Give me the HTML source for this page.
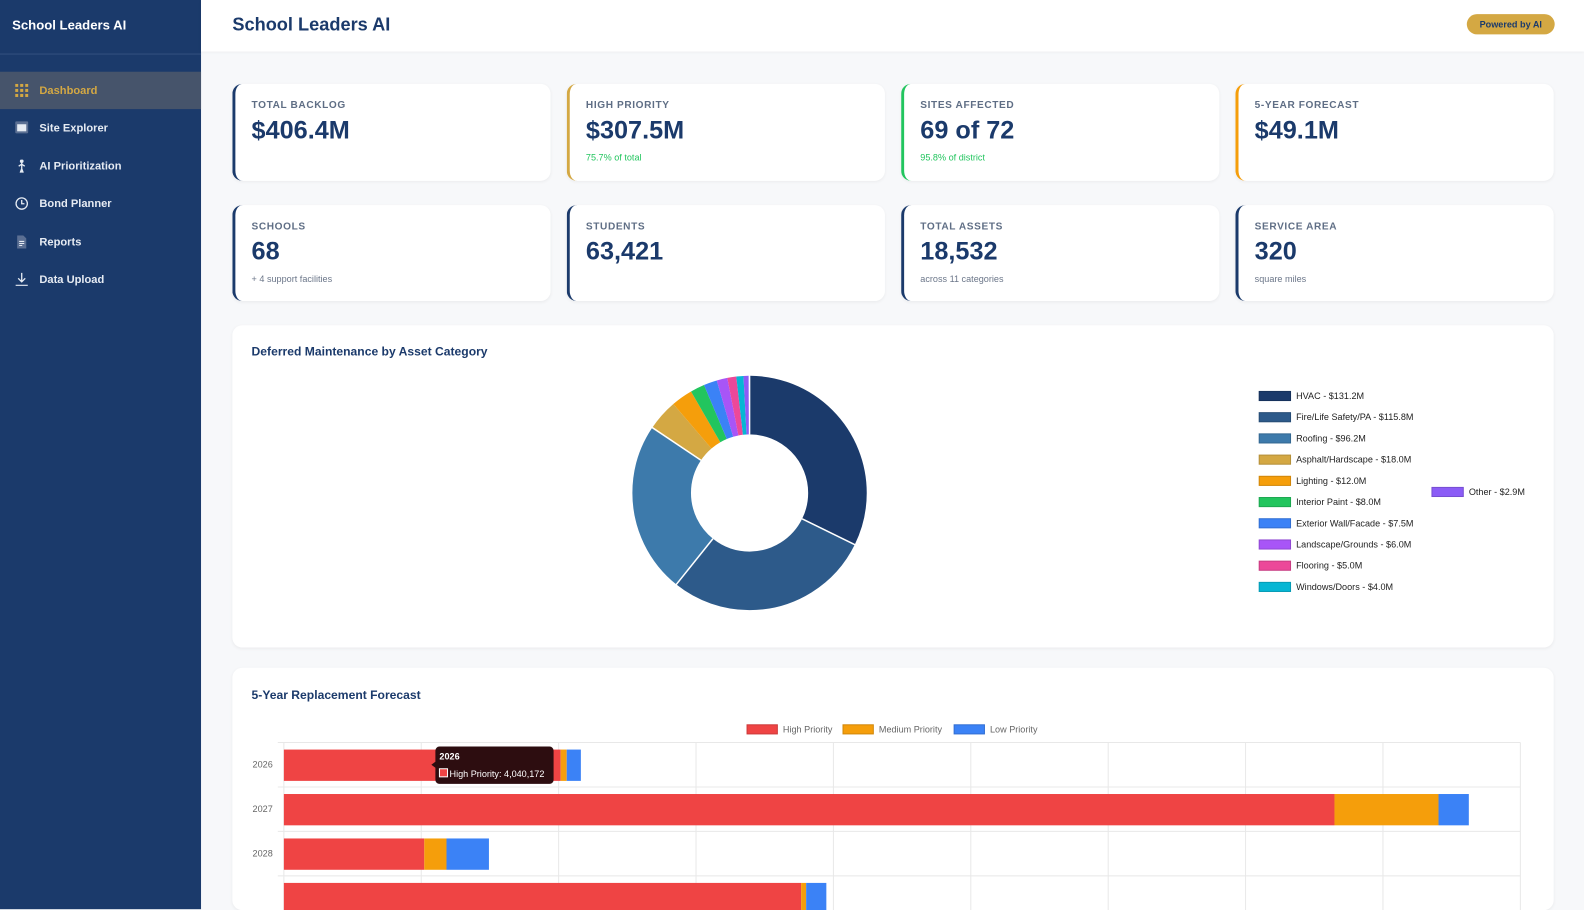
<!DOCTYPE html>
<html><head><meta charset="utf-8"><style>
*{box-sizing:border-box;margin:0;padding:0}
body{width:1584px;height:893px;overflow:hidden;font-family:"Liberation Sans",sans-serif;background:#f7f8fa;position:relative}
#w{position:absolute;left:0;top:0;width:1568px;height:884px;transform:scale(1.0102);transform-origin:0 0}
.sb{position:absolute;left:0;top:0;width:199px;height:900px;background:#1b3a6b}
.sb .logo{height:54px;border-bottom:1px solid #34507f;color:#fff;font-weight:bold;font-size:13px;padding:17px 12px}
.nav{position:absolute;left:0;width:199px;height:37px;color:#e6ebf3;font-size:11px;font-weight:bold;display:flex;align-items:center;padding-left:39px}
.nav.act{background:#46546b;color:#d4a843}
.ic{position:absolute;left:15px;top:12px;width:13px;height:13px}
.hdr{position:absolute;left:199px;top:0;right:0;height:51px;background:#fff;box-shadow:0 1px 3px rgba(0,0,0,.06)}
.hdr h1{position:absolute;left:31px;top:14px;font-size:18px;color:#1b3a6b}
.badge{position:absolute;left:1253px;top:14px;width:87px;height:20px;border-radius:10px;background:#d4a843;color:#1b3a6b;font-size:9px;font-weight:bold;text-align:center;line-height:20px}
.card{position:absolute;background:#fff;border-radius:10px;box-shadow:0 1px 3px rgba(0,0,0,.05)}
.st{width:315px;border-left:3px solid #1b3a6b;padding:16px 0 0 16px}
.st .l{font-size:10px;font-weight:bold;color:#5f6e85;letter-spacing:.6px}
.st .v{font-size:25px;font-weight:bold;color:#1b3a6b;margin-top:5px}
.st .s{font-size:9px;color:#6b7689;margin-top:7px}
.st .g{color:#22c55e}
.ttl{position:absolute;left:19px;font-size:12px;font-weight:bold;color:#1b3a6b}
.lg{position:absolute;font-size:9px;color:#222;display:flex;align-items:center}
.lg i{display:inline-block;width:32px;height:10px;margin-right:5px;border:1px solid rgba(0,0,0,.15)}
</style></head><body><div id="w">
<div class="sb"><div class="logo">School Leaders AI</div>
<div class="nav act" style="top:71px"><svg class="ic" viewBox="0 0 13 13" fill="#d4a843"><rect x="0" y="0" width="3" height="3"/><rect x="5" y="0" width="3" height="3"/><rect x="10" y="0" width="3" height="3"/><rect x="0" y="5" width="3" height="3"/><rect x="5" y="5" width="3" height="3"/><rect x="10" y="5" width="3" height="3"/><rect x="0" y="10" width="3" height="3"/><rect x="5" y="10" width="3" height="3"/><rect x="10" y="10" width="3" height="3"/></svg>Dashboard</div>
<div class="nav" style="top:108px"><svg class="ic" viewBox="0 0 13 13"><rect x="0" y="0" width="13" height="12" rx="1.5" fill="#5b6f93"/><rect x="2" y="3" width="9" height="7" fill="#e6ebf3"/></svg>Site Explorer</div>
<div class="nav" style="top:146px"><svg class="ic" viewBox="0 0 13 13" stroke="#e6ebf3" fill="none" stroke-width="1.3"><circle cx="6.5" cy="1.5" r="1.2" fill="#e6ebf3"/><path d="M6.5 3v10M3.5 6.5l3-2 3 2M5 13l1.5-4 1.5 4"/></svg>AI Prioritization</div>
<div class="nav" style="top:183px"><svg class="ic" viewBox="0 0 13 13" stroke="#e6ebf3" fill="none" stroke-width="1.3"><circle cx="6.5" cy="6.5" r="5.6"/><path d="M6.5 3v3.7h2.7"/></svg>Bond Planner</div>
<div class="nav" style="top:221px"><svg class="ic" viewBox="0 0 13 13"><path d="M2 0h6l3 3v10H2z" fill="#5b6f93"/><path d="M4 6h5M4 8h5M4 10h3" stroke="#e6ebf3" stroke-width="1"/></svg>Reports</div>
<div class="nav" style="top:258px"><svg class="ic" viewBox="0 0 13 13" stroke="#e6ebf3" fill="none" stroke-width="1.3"><path d="M6.5 0v9M3 5.5l3.5 3.5 3.5-3.5M0.5 12.5h12"/></svg>Data Upload</div>
</div>
<div class="hdr"><h1>School Leaders AI</h1><div class="badge">Powered by AI</div></div>

<div class="card st" style="left:230px;top:83px;height:96px"><div class="l">TOTAL BACKLOG</div><div class="v">$406.4M</div></div>
<div class="card st" style="left:561px;top:83px;height:96px;border-left-color:#d4a843"><div class="l">HIGH PRIORITY</div><div class="v">$307.5M</div><div class="s g">75.7% of total</div></div>
<div class="card st" style="left:892px;top:83px;height:96px;border-left-color:#22c55e"><div class="l">SITES AFFECTED</div><div class="v">69 of 72</div><div class="s g">95.8% of district</div></div>
<div class="card st" style="left:1223px;top:83px;height:96px;border-left-color:#f59e0b"><div class="l">5-YEAR FORECAST</div><div class="v">$49.1M</div></div>
<div class="card st" style="left:230px;top:203px;height:95px"><div class="l">SCHOOLS</div><div class="v">68</div><div class="s">+ 4 support facilities</div></div>
<div class="card st" style="left:561px;top:203px;height:95px"><div class="l">STUDENTS</div><div class="v">63,421</div></div>
<div class="card st" style="left:892px;top:203px;height:95px"><div class="l">TOTAL ASSETS</div><div class="v">18,532</div><div class="s">across 11 categories</div></div>
<div class="card st" style="left:1223px;top:203px;height:95px"><div class="l">SERVICE AREA</div><div class="v">320</div><div class="s">square miles</div></div>

<div class="card" style="left:230px;top:322px;width:1308px;height:319px">
<div class="ttl" style="top:19px">Deferred Maintenance by Asset Category</div>
<svg style="position:absolute;left:395px;top:49px" width="234" height="234" viewBox="0 0 234 234">
<g transform="rotate(-90 117 117)" fill="none" stroke-width="58">
<circle cx="117" cy="117" r="87" pathLength="406.6" stroke="#1b3a6b" stroke-dasharray="131.2 500" stroke-dashoffset="0"/>
<circle cx="117" cy="117" r="87" pathLength="406.6" stroke="#2d5a8a" stroke-dasharray="115.8 500" stroke-dashoffset="-131.2"/>
<circle cx="117" cy="117" r="87" pathLength="406.6" stroke="#3d7aab" stroke-dasharray="96.2 500" stroke-dashoffset="-247"/>
<circle cx="117" cy="117" r="87" pathLength="406.6" stroke="#d4a843" stroke-dasharray="18 500" stroke-dashoffset="-343.2"/>
<circle cx="117" cy="117" r="87" pathLength="406.6" stroke="#f59e0b" stroke-dasharray="12 500" stroke-dashoffset="-361.2"/>
<circle cx="117" cy="117" r="87" pathLength="406.6" stroke="#22c55e" stroke-dasharray="8 500" stroke-dashoffset="-373.2"/>
<circle cx="117" cy="117" r="87" pathLength="406.6" stroke="#3b82f6" stroke-dasharray="7.5 500" stroke-dashoffset="-381.2"/>
<circle cx="117" cy="117" r="87" pathLength="406.6" stroke="#a855f7" stroke-dasharray="6 500" stroke-dashoffset="-388.7"/>
<circle cx="117" cy="117" r="87" pathLength="406.6" stroke="#ec4899" stroke-dasharray="5 500" stroke-dashoffset="-394.7"/>
<circle cx="117" cy="117" r="87" pathLength="406.6" stroke="#06b6d4" stroke-dasharray="4 500" stroke-dashoffset="-399.7"/>
<circle cx="117" cy="117" r="87" pathLength="406.6" stroke="#8b5cf6" stroke-dasharray="2.9 500" stroke-dashoffset="-403.7"/>
</g>
<g stroke="#fff" stroke-width="1.5"><line x1="117" y1="0" x2="117" y2="59"/><line x1="169" y1="142.6" x2="222" y2="168.6"/><line x1="80.7" y1="162.3" x2="43.9" y2="208.3"/><line x1="68.9" y1="84.6" x2="19.9" y2="51.7"/></g>
</svg>
<div class="lg" style="left:1016px;top:65px"><i style="background:#1b3a6b"></i>HVAC - $131.2M</div>
<div class="lg" style="left:1016px;top:86px"><i style="background:#2d5a8a"></i>Fire/Life Safety/PA - $115.8M</div>
<div class="lg" style="left:1016px;top:107px"><i style="background:#3d7aab"></i>Roofing - $96.2M</div>
<div class="lg" style="left:1016px;top:128px"><i style="background:#d4a843"></i>Asphalt/Hardscape - $18.0M</div>
<div class="lg" style="left:1016px;top:149px"><i style="background:#f59e0b"></i>Lighting - $12.0M</div>
<div class="lg" style="left:1016px;top:170px"><i style="background:#22c55e"></i>Interior Paint - $8.0M</div>
<div class="lg" style="left:1016px;top:191px"><i style="background:#3b82f6"></i>Exterior Wall/Facade - $7.5M</div>
<div class="lg" style="left:1016px;top:212px"><i style="background:#a855f7"></i>Landscape/Grounds - $6.0M</div>
<div class="lg" style="left:1016px;top:233px"><i style="background:#ec4899"></i>Flooring - $5.0M</div>
<div class="lg" style="left:1016px;top:254px"><i style="background:#06b6d4"></i>Windows/Doors - $4.0M</div>
<div class="lg" style="left:1187px;top:160px"><i style="background:#8b5cf6"></i>Other - $2.9M</div>
</div>

<div class="card" style="left:230px;top:661px;width:1308px;height:240px;overflow:hidden">
<div class="ttl" style="top:20px">5-Year Replacement Forecast</div>
<div class="lg" style="left:509px;top:56px;color:#666"><i style="background:#ef4444;width:31px"></i>High Priority</div>
<div class="lg" style="left:604px;top:56px;color:#666"><i style="background:#f59e0b;width:31px"></i>Medium Priority</div>
<div class="lg" style="left:714px;top:56px;color:#666"><i style="background:#3b82f6;width:31px"></i>Low Priority</div>
<svg style="position:absolute;left:0;top:0" width="1308" height="240">
<g stroke="#e8e8e8" stroke-width="1">
<line x1="51" y1="74" x2="51" y2="240"/><line x1="187" y1="74" x2="187" y2="240"/><line x1="323" y1="74" x2="323" y2="240"/><line x1="459" y1="74" x2="459" y2="240"/><line x1="595" y1="74" x2="595" y2="240"/><line x1="731" y1="74" x2="731" y2="240"/><line x1="867" y1="74" x2="867" y2="240"/><line x1="1003" y1="74" x2="1003" y2="240"/><line x1="1139" y1="74" x2="1139" y2="240"/><line x1="1275" y1="74" x2="1275" y2="240"/>
<line x1="45" y1="74" x2="1275" y2="74"/><line x1="45" y1="118" x2="1275" y2="118"/><line x1="45" y1="162" x2="1275" y2="162"/><line x1="45" y1="206" x2="1275" y2="206"/>
</g>
<g font-size="9" fill="#666" font-family="Liberation Sans"><text x="20" y="99">2026</text><text x="20" y="143">2027</text><text x="20" y="187">2028</text></g>
<rect x="51" y="81" width="274" height="31" fill="#ef4444"/><rect x="325" y="81" width="6" height="31" fill="#f59e0b"/><rect x="331" y="81" width="14" height="31" fill="#3b82f6"/>
<rect x="51" y="125" width="1040" height="31" fill="#ef4444"/><rect x="1091" y="125" width="103" height="31" fill="#f59e0b"/><rect x="1194" y="125" width="30" height="31" fill="#3b82f6"/>
<rect x="51" y="169" width="139" height="31" fill="#ef4444"/><rect x="190" y="169" width="22" height="31" fill="#f59e0b"/><rect x="212" y="169" width="42" height="31" fill="#3b82f6"/>
<rect x="51" y="213" width="512" height="31" fill="#ef4444"/><rect x="563" y="213" width="5" height="31" fill="#f59e0b"/><rect x="568" y="213" width="20" height="31" fill="#3b82f6"/>
<path d="M205 78h109a4 4 0 0 1 4 4v29a4 4 0 0 1-4 4H205a4 4 0 0 1-4-4V99l-4-3 4-3V82a4 4 0 0 1 4-4z" fill="#2d0d10"/>
<text x="205" y="91" font-size="9" font-weight="bold" fill="#fff" font-family="Liberation Sans">2026</text>
<rect x="205" y="100" width="8" height="8" fill="#ef4444" stroke="#fff" stroke-width="1"/>
<text x="215" y="108" font-size="9" fill="#fff" font-family="Liberation Sans">High Priority: 4,040,172</text>
</svg>
</div>
</div></body></html>
